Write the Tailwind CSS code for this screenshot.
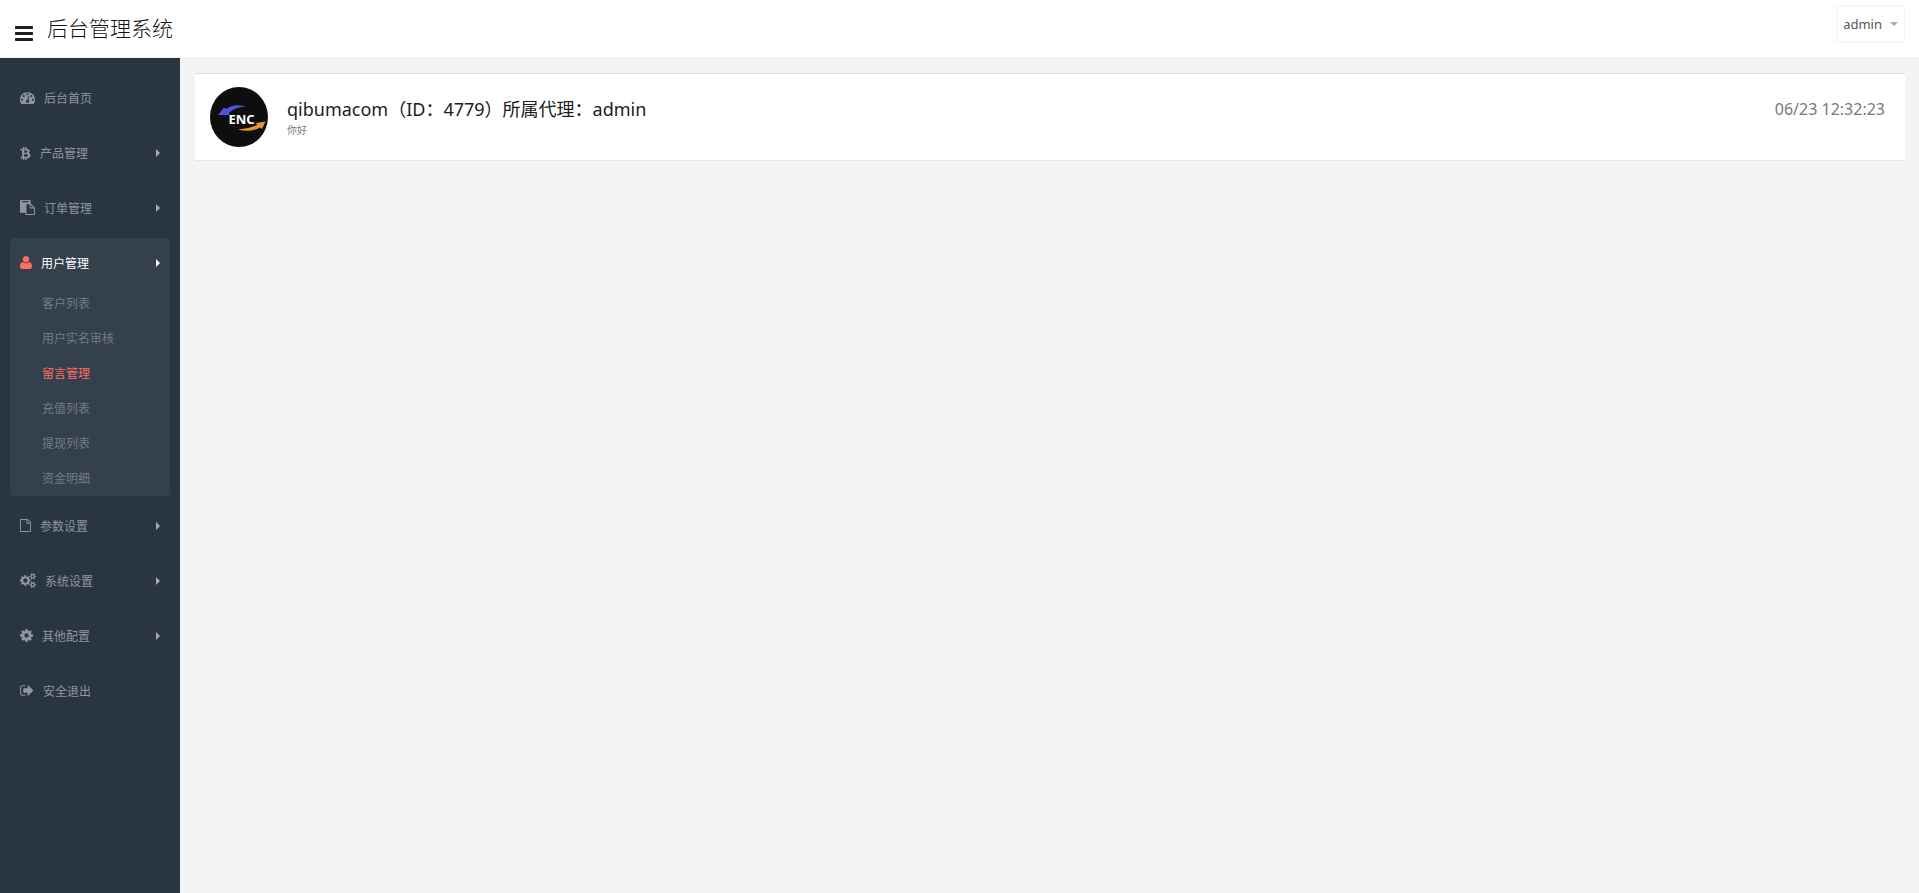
<!DOCTYPE html>
<html lang="zh-CN">
<head>
  <meta charset="UTF-8">
  <meta name="viewport" content="width=device-width, initial-scale=1.0">
  <title>后台管理系统</title>
  <script src="https://cdn.jsdelivr.net/npm/@tailwindcss/browser@4"></script>
</head>
<body class="flex flex-col min-h-screen bg-[#f4f4f4] font-['Noto_Sans','Noto_Sans_CJK_SC',sans-serif] text-[#797979]">
  <header class="flex items-start justify-between h-[58px] bg-white border-b border-[#f1f2f7] pl-[15px] pr-3.5">
    <div class="flex items-center gap-3.5">
      <button type="button" aria-label="菜单" class="mt-2.5 text-[#202020]">
        <svg class="w-[18px] h-[21px]" viewBox="128 0 1536 1792" fill="currentColor"><path d="M1664 1344v128q0 26-19 45t-45 19h-1408q-26 0-45-19t-19-45v-128q0-26 19-45t45-19h1408q26 0 45 19t19 45zm0-512v128q0 26-19 45t-45 19h-1408q-26 0-45-19t-19-45v-128q0-26 19-45t45-19h1408q26 0 45 19t19 45zm0-512v128q0 26-19 45t-45 19h-1408q-26 0-45-19t-19-45v-128q0-26 19-45t45-19h1408q26 0 45 19t19 45z"/></svg>
      </button>
      <a href="#" class="text-[21px] leading-[56px] font-light text-[#111]">后台管理系统</a>
    </div>
    <button type="button" class="flex items-center gap-2 h-[38px] mt-[5px] px-1.5 border border-[#f1f2f7] rounded text-[13px] text-[#555]">
      <span class="pt-0.5">admin</span>
      <svg class="w-2 h-1" viewBox="0 0 8 4" fill="#a4aabb"><path d="M0 0h8L4 4z"/></svg>
    </button>
  </header>

  <div class="flex flex-1">
    <aside class="w-[180px] shrink-0 bg-[#2a3542] px-2.5 pt-[15px] text-xs text-[#8f959b]">
      <nav>
        <ul class="flex flex-col gap-[5px]">
          <li>
            <a href="#" class="flex items-center gap-[9px] h-[50px] px-2.5">
              <svg class="h-[15px] w-[15px] mb-0.5" viewBox="0 0 1792 1792" fill="currentColor"><path d="M384 1152q0-53-37.5-90.5t-90.5-37.5-90.5 37.5-37.5 90.5 37.5 90.5 90.5 37.5 90.5-37.5 37.5-90.5zm192-448q0-53-37.5-90.5t-90.5-37.5-90.5 37.5-37.5 90.5 37.5 90.5 90.5 37.5 90.5-37.5 37.5-90.5zm428 481l101-382q6-26-7.5-48.5t-38.5-29.5-48 6.5-30 39.5l-101 382q-60 5-107 43.5t-63 98.5q-20 77 20 146t117 89 146-20 89-117q16-60-6-117t-72-91zm660-33q0-53-37.5-90.5t-90.5-37.5-90.5 37.5-37.5 90.5 37.5 90.5 90.5 37.5 90.5-37.5 37.5-90.5zm-640-640q0-53-37.5-90.5t-90.5-37.5-90.5 37.5-37.5 90.5 37.5 90.5 90.5 37.5 90.5-37.5 37.5-90.5zm448 192q0-53-37.5-90.5t-90.5-37.5-90.5 37.5-37.5 90.5 37.5 90.5 90.5 37.5 90.5-37.5 37.5-90.5zm320 448q0 261-141 483-19 29-54 29h-1402q-35 0-54-29-141-221-141-483 0-182 71-348t191-286 286-191 348-71 348 71 286 191 191 286 71 348z"/></svg>
              <span class="pt-0.5">后台首页</span>
            </a>
          </li>
          <li>
            <a href="#" class="flex items-center gap-[9px] h-[50px] px-2.5">
              <svg class="h-[15px] w-[11px] mb-0.5" viewBox="256 0 1280 1792" fill="currentColor"><path d="M1399 711q18 182-131 258 117 28 175 103t45 214q-7 71-32.5 125t-64.5 89-97 58.5-121.5 34.5-145.5 15v255h-154v-251q-80 0-122-1v252h-154v-255q-18 0-54-.5t-55-.5h-200l31-183h111q50 0 58-51v-402h16q-6-1-16-1v-287q-13-68-89-68h-111v-164l212 1q64 0 97-1v-252h154v247q82-2 122-2v-245h154v252q79 7 140 22.5t113 45 82.5 78 36.5 114.5zm-215 545q0-36-15-64t-37-46-57.5-30.5-65.5-18.5-74-9-69-3-64.5 1-47.5 1v338q8 0 37 .5t48 .5 53-1.5 58.5-4 57-8.5 55.5-14 47.5-21 39.5-30 24.5-40 9.5-51zm-71-476q0-33-12.5-58.5t-30.5-42-48-28-55-16.5-61.5-8-58-2.5-54 1-39.5.5v307q5 0 34.5.5t46.5 0 50-2 55-5.5 51.5-11 48.5-18.5 37-27 27-38.5 9-51z"/></svg>
              <span class="pt-0.5">产品管理</span>
              <svg class="ml-auto w-1 h-2" viewBox="0 0 4 8" fill="#aaa"><path d="M0 0l4 4-4 4z"/></svg>
            </a>
          </li>
          <li>
            <a href="#" class="flex items-center gap-[9px] h-[50px] px-2.5">
              <svg class="h-[15px] w-[15px] mb-0.5" viewBox="0 0 1792 1792" fill="currentColor"><path d="M768 1664h896v-640h-416q-40 0-68-28t-28-68v-416h-384v1152zm256-1440v-64q0-13-9.5-22.5t-22.5-9.5h-704q-13 0-22.5 9.5t-9.5 22.5v64q0 13 9.5 22.5t22.5 9.5h704q13 0 22.5-9.5t9.5-22.5zm256 672h299l-299-299v299zm512 128v672q0 40-28 68t-68 28h-960q-40 0-68-28t-28-68v-160h-544q-40 0-68-28t-28-68v-1344q0-40 28-68t68-28h1088q40 0 68 28t28 68v328q21 13 36 28l408 408q28 28 48 76t20 88z"/></svg>
              <span class="pt-0.5">订单管理</span>
              <svg class="ml-auto w-1 h-2" viewBox="0 0 4 8" fill="#aaa"><path d="M0 0l4 4-4 4z"/></svg>
            </a>
          </li>
          <li class="bg-[#35404d] rounded">
            <a href="#" class="flex items-center gap-[9px] h-12 pt-0.5 px-2.5 text-white">
              <svg class="h-[13px] w-3 mb-0.5 text-[#ff6c60]" viewBox="0 0 1408 1536" fill="currentColor"><path transform="translate(0 1408) scale(1 -1)" d="M1408 131q0 -120 -73 -189.5t-194 -69.5h-874q-121 0 -194 69.5t-73 189.5q0 53 3.5 103.5t14 109t26.5 108.5t43 97.5t62 81t85.5 53.5t111.5 20q9 0 42 -21.5t74.5 -48t108 -48t133.5 -21.5t133.5 21.5t108 48t74.5 48t42 21.5q61 0 111.5 -20t85.5 -53.5t62 -81t43 -97.5t26.5 -108.5t14 -109t3.5 -103.5zM1088 1024q0 -159 -112.5 -271.5t-271.5 -112.5t-271.5 112.5t-112.5 271.5t112.5 271.5t271.5 112.5t271.5 -112.5t112.5 -271.5z"/></svg>
              <span class="pt-0.5">用户管理</span>
              <svg class="ml-auto w-1 h-2" viewBox="0 0 4 8" fill="#fff"><path d="M0 0l4 4-4 4z"/></svg>
            </a>
            <ul class="pl-8 leading-[35px] text-[#727c86]">
              <li><a href="#" class="block">客户列表</a></li>
              <li><a href="#" class="block">用户实名审核</a></li>
              <li><a href="#" class="block text-[#ff6c60]">留言管理</a></li>
              <li><a href="#" class="block">充值列表</a></li>
              <li><a href="#" class="block">提现列表</a></li>
              <li><a href="#" class="block">资金明细</a></li>
            </ul>
          </li>
          <li>
            <a href="#" class="flex items-center gap-[9px] h-[50px] px-2.5">
              <svg class="h-[13px] w-[11px] mb-0.5" viewBox="128 0 1536 1792" fill="currentColor"><path d="M1596 380q28 28 48 76t20 88v1152q0 40-28 68t-68 28h-1344q-40 0-68-28t-28-68v-1600q0-40 28-68t68-28h896q40 0 88 20t76 48zm-444-244v376h376q-10-29-22-41l-313-313q-12-12-41-22zm384 1528v-1024h-416q-40 0-68-28t-28-68v-416h-768v1536h1280z"/></svg>
              <span class="pt-0.5">参数设置</span>
              <svg class="ml-auto w-1 h-2" viewBox="0 0 4 8" fill="#aaa"><path d="M0 0l4 4-4 4z"/></svg>
            </a>
          </li>
          <li>
            <a href="#" class="flex items-center gap-[9px] h-[50px] px-2.5">
              <svg class="h-[15px] w-4 mb-0.5" viewBox="-64 0 1920 1792" fill="currentColor"><path d="M832 896q0-106-75-181t-181-75-181 75-75 181 75 181 181 75 181-75 75-181zm768 512q0-52-38-90t-90-38-90 38-38 90q0 53 37.5 90.5t90.5 37.5 90.5-37.5 37.5-90.5zm0-1024q0-52-38-90t-90-38-90 38-38 90q0 53 37.5 90.5t90.5 37.5 90.5-37.5 37.5-90.5zm-384 421v185q0 10-7 19.5t-16 10.5l-155 24q-11 35-32 76 34 48 90 115 7 11 7 20 0 12-7 19-23 30-82.5 89.5t-78.5 59.5q-11 0-21-7l-115-90q-37 19-77 31-11 108-23 155-7 24-30 24h-186q-11 0-20-7.5t-10-17.5l-23-153q-34-10-75-31l-118 89q-7 7-20 7-11 0-21-8-144-133-144-160 0-9 7-19 10-14 41-53t47-61q-23-44-35-82l-152-24q-10-1-17-9.5t-7-19.5v-185q0-10 7-19.5t16-10.5l155-24q11-35 32-76-34-48-90-115-7-11-7-20 0-12 7-20 22-30 82-89t79-59q11 0 21 7l115 90q34-18 77-32 11-108 23-154 7-24 30-24h186q11 0 20 7.5t10 17.5l23 153q34 10 75 31l118-89q8-7 20-7 11 0 21 8 144 133 144 160 0 8-7 19-12 16-42 54t-45 60q23 48 34 82l152 23q10 2 17 10.5t7 19.5zm640 533v140q0 16-149 31-12 27-30 52 51 113 51 138 0 4-4 7-122 71-124 71-8 0-46-47t-52-68q-20 2-30 2t-30-2q-14 21-52 68t-46 47q-2 0-124-71-4-3-4-7 0-25 51-138-18-25-30-52-149-15-149-31v-140q0-16 149-31 13-29 30-52-51-113-51-138 0-4 4-7 4-2 35-20t59-34 30-16q8 0 46 46.5t52 67.5q20-2 30-2t30 2q51-71 92-112l6-2q4 0 124 70 4 3 4 7 0 25-51 138 17 23 30 52 149 15 149 31zm0-1024v140q0 16-149 31-12 27-30 52 51 113 51 138 0 4-4 7-122 71-124 71-8 0-46-47t-52-68q-20 2-30 2t-30-2q-14 21-52 68t-46 47q-2 0-124-71-4-3-4-7 0-25 51-138-18-25-30-52-149-15-149-31v-140q0-16 149-31 13-29 30-52-51-113-51-138 0-4 4-7 4-2 35-20t59-34 30-16q8 0 46 46.5t52 67.5q20-2 30-2t30 2q51-71 92-112l6-2q4 0 124 70 4 3 4 7 0 25-51 138 17 23 30 52 149 15 149 31z"/></svg>
              <span class="pt-0.5">系统设置</span>
              <svg class="ml-auto w-1 h-2" viewBox="0 0 4 8" fill="#aaa"><path d="M0 0l4 4-4 4z"/></svg>
            </a>
          </li>
          <li>
            <a href="#" class="flex items-center gap-[9px] h-[50px] px-2.5">
              <svg class="h-[15px] w-[13px] mb-0.5" viewBox="128 0 1536 1792" fill="currentColor"><path d="M1152 896q0-106-75-181t-181-75-181 75-75 181 75 181 181 75 181-75 75-181zm512-109v222q0 12-8 23t-20 13l-185 28q-19 54-39 91 35 50 107 138 10 12 10 25t-9 23q-27 37-99 108t-94 71q-12 0-26-9l-138-108q-44 23-91 38-16 136-29 186-7 28-36 28h-222q-14 0-24.5-8.5t-11.5-21.5l-28-184q-49-16-90-37l-141 107q-10 9-25 9-14 0-25-11-126-114-165-168-7-10-7-23 0-12 8-23 15-21 51-66.5t54-70.5q-27-50-41-99l-183-27q-13-2-21-12.5t-8-23.5v-222q0-12 8-23t19-13l186-28q14-46 39-92-40-57-107-138-10-12-10-24 0-10 9-23 26-36 98.5-107.5t94.5-71.5q13 0 26 10l138 107q44-23 91-38 16-136 29-186 7-28 36-28h222q14 0 24.5 8.5t11.5 21.5l28 184q49 16 90 37l142-107q9-9 24-9 13 0 25 10 129 119 165 170 7 8 7 22 0 12-8 23-15 21-51 66.5t-54 70.5q26 50 41 98l183 28q13 2 21 12.5t8 23.5z"/></svg>
              <span class="pt-0.5">其他配置</span>
              <svg class="ml-auto w-1 h-2" viewBox="0 0 4 8" fill="#aaa"><path d="M0 0l4 4-4 4z"/></svg>
            </a>
          </li>
          <li>
            <a href="#" class="flex items-center gap-[9px] h-[50px] px-2.5">
              <svg class="h-[15px] w-3.5 mb-0.5" viewBox="64 0 1664 1792" fill="currentColor"><path d="M704 1440q0 4 1 20t.5 26.5-3 23.5-10 19.5-20.5 6.5h-320q-119 0-203.5-84.5t-84.5-203.5v-704q0-119 84.5-203.5t203.5-84.5h320q13 0 22.5 9.5t9.5 22.5q0 4 1 20t.5 26.5-3 23.5-10 19.5-20.5 6.5h-320q-66 0-113 47t-47 113v704q0 66 47 113t113 47h312l11.5 1 11.5 3 8 5.5 7 9 2 13.5zm928-544q0 26-19 45l-544 544q-19 19-45 19t-45-19-19-45v-288h-448q-26 0-45-19t-19-45v-384q0-26 19-45t45-19h448v-288q0-26 19-45t45-19 45 19l544 544q19 19 19 45z"/></svg>
              <span class="pt-0.5">安全退出</span>
            </a>
          </li>
        </ul>
      </nav>
    </aside>

    <main class="flex-1 p-[15px] pr-3.5">
      <a href="#" class="flex items-start bg-white border-t border-t-[#dcdcdc] border-b border-b-[#e7e7e7] px-[15px] py-[13px]">
        <!-- avatar -->
        <svg class="w-[58px] h-[60px] shrink-0" viewBox="0 0 58 60" role="img" aria-label="ENC">
          <ellipse cx="29" cy="30" rx="29" ry="30" fill="#0e0e0e"/>
          <path d="M8 28L14 20.500L16 22Q24 16 36 19.500Q25 20 19 26L20 28Z" fill="#4a55d8"/>
          <path d="M28 42.500Q38 42 47 38L46 36L55.500 34.500L52 42L50 40.500Q40 46 28 42.500Z" fill="#e8952c"/>
          <text x="31.500" y="36.500" text-anchor="middle" font-family="Noto Sans" font-weight="700" font-size="13" fill="#fff">ENC</text>
        </svg>
        <div class="ml-[19px] mt-[9px] flex-1">
          <h2 class="text-lg leading-[26px] text-[#202020]">qibumacom（ID：4779）所属代理：admin</h2>
          <p class="text-[10px] leading-4">你好</p>
        </div>
        <time class="mt-[9px] mr-[5px] text-base leading-[26px]">06/23 12:32:23</time>
      </a>
    </main>
  </div>
</body>
</html>
